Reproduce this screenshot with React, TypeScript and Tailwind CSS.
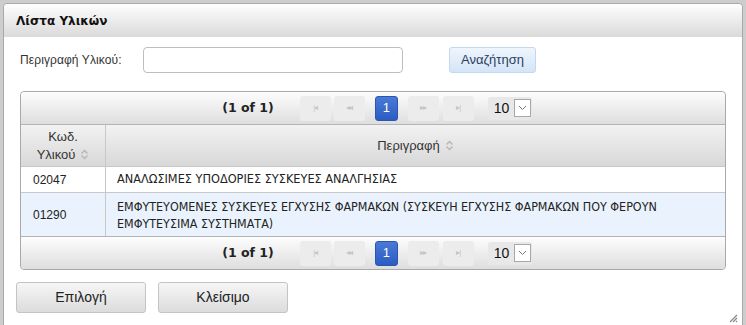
import React from "react";

const font = "font-['Liberation_Sans',Arial,sans-serif]";
const boldFont = "font-['DejaVu_Sans',Verdana,sans-serif] font-bold";
const cellFont = "font-['DejaVu_Sans_Condensed','Liberation_Sans',sans-serif]";

const NavButton = ({ glyph }: { glyph: string }) => (
  <div className="flex h-[25px] w-[31px] items-center justify-center rounded-[3px] bg-[#ececec] text-[8px] tracking-[-1px] text-[#c4c4c4]">
    {glyph}
  </div>
);

const SortIcon = () => (
  <svg width="9" height="11" viewBox="0 0 9 11" className="inline-block">
    <path d="M1.5 4.5 L4.5 1.5 L7.5 4.5" fill="none" stroke="#b8b8b8" strokeWidth="1.5" />
    <path d="M1.5 6.5 L4.5 9.5 L7.5 6.5" fill="none" stroke="#b8b8b8" strokeWidth="1.5" />
  </svg>
);

const Paginator = ({ bottom }: { bottom?: boolean }) => (
  <div
    className={`flex h-[33px] items-center justify-center bg-gradient-to-b from-[#fdfdfd] to-[#dedede] ${
      bottom ? "rounded-b-[4px] border-t border-[#b4b4b4]" : "rounded-t-[4px] border-b border-[#b4b4b4]"
    }`}
  >
    <div className="flex items-center pl-[8px]">
      <span className={`mr-[26px] text-[12.5px] text-[#222] ${boldFont}`}>(1 of 1)</span>
      <div className="flex items-center gap-[3px]">
        <NavButton glyph="|◂" />
        <NavButton glyph="◂◂" />
      </div>
      <div className="mx-[10px] flex h-[25px] w-[23px] items-center justify-center rounded-[3px] border border-[#2a55b0] bg-gradient-to-b from-[#4a7ad6] to-[#2b5cc2] text-[13px] text-white">
        1
      </div>
      <div className="flex items-center gap-[4px]">
        <NavButton glyph="▸▸" />
        <NavButton glyph="▸|" />
      </div>
      <div className="ml-[14px] flex h-[23px] w-[44px] items-center rounded-[3px] bg-[#e8e8e8] pl-[6px]">
        <span className="text-[14px] text-[#111]">10</span>
        <div className="ml-auto mr-[1px] flex h-[18px] w-[17px] items-center justify-center border border-[#a8a8a8] bg-white">
          <svg width="9" height="6" viewBox="0 0 9 6">
            <path d="M1 1 L4.5 4.5 L8 1" fill="none" stroke="#777" strokeWidth="1" />
          </svg>
        </div>
      </div>
    </div>
  </div>
);

export default function App() {
  return (
    <div className={`flex h-[325px] w-[746px] flex-col bg-[#cdcdcd] ${font}`}>
      <div className="flex flex-1 px-[3px] pt-[3px]">
        <div className="flex flex-1 flex-col rounded-t-[4px] border border-[#a9a9a9] bg-white">
          <div
            className={`flex h-[33px] items-center rounded-t-[4px] bg-gradient-to-b from-[#fefefe] to-[#dadada] pl-[12px] text-[12px] text-[#111] ${boldFont}`}
          >
            Λίστα Υλικών
          </div>
          <div className="flex flex-1 flex-col px-[16px]">
            <div className="mt-[10px] flex items-center">
              <label className="w-[123px] text-[12px] tracking-[0.1px] text-[#333]">Περιγραφή Υλικού:</label>
              <input className="h-[26px] w-[260px] rounded-[4px] border border-[#bdbdbd] bg-white" />
              <button className="ml-[46px] h-[26px] w-[87px] rounded-[3px] border border-[#c3d7ef] bg-gradient-to-b from-[#eef5fd] to-[#d4e5f8] text-[13px] text-[#2a3f5c]">
                Αναζήτηση
              </button>
            </div>
            <div className="mt-[18px] overflow-hidden rounded-[4px] border border-[#a9a9a9]">
              <Paginator />
              <div className="flex h-[42px] border-b border-[#c8c8c8] bg-gradient-to-b from-[#f2f2f2] to-[#d8d8d8] text-[13px] text-[#333]">
                <div className="flex w-[85px] flex-col items-center justify-center border-r border-[#c8c8c8] leading-[18px]">
                  <span>Κωδ.</span>
                  <span className="flex items-center gap-[5px]">
                    Υλικού <SortIcon />
                  </span>
                </div>
                <div className="flex flex-1 items-center justify-center gap-[5px]">
                  Περιγραφή <SortIcon />
                </div>
              </div>
              <div className="flex h-[26px] border-b border-[#c8c8c8] bg-white text-[12px] text-[#222]">
                <div className="flex w-[85px] items-center border-r border-[#c8c8c8] pl-[12px]">02047</div>
                <div className={`flex flex-1 items-center pl-[11px] text-[12.6px] ${cellFont}`}>
                  ΑΝΑΛΩΣΙΜΕΣ ΥΠΟΔΟΡΙΕΣ ΣΥΣΚΕΥΕΣ ΑΝΑΛΓΗΣΙΑΣ
                </div>
              </div>
              <div className="flex h-[43px] bg-[#eaf3fd] text-[12px] text-[#222]">
                <div className="flex w-[85px] items-center border-r border-[#c8c8c8] pl-[12px]">01290</div>
                <div className={`flex flex-1 items-center pl-[11px] pr-[10px] text-[12.4px] leading-[17px] ${cellFont}`}>
                  ΕΜΦΥΤΕΥΟΜΕΝΕΣ ΣΥΣΚΕΥΕΣ ΕΓΧΥΣΗΣ ΦΑΡΜΑΚΩΝ (ΣΥΣΚΕΥΗ ΕΓΧΥΣΗΣ ΦΑΡΜΑΚΩΝ ΠΟΥ ΦΕΡΟΥΝ ΕΜΦΥΤΕΥΣΙΜΑ ΣΥΣΤΗΜΑΤΑ)
                </div>
              </div>
              <Paginator bottom />
            </div>
            <div className="mt-[12px] flex gap-[12px]">
              <button className="-ml-[4px] h-[31px] w-[130px] rounded-[3px] border border-[#c4c4c4] bg-gradient-to-b from-[#f6f6f6] to-[#dcdcdc] text-[14px] text-[#222]">
                Επιλογή
              </button>
              <button className="h-[31px] w-[130px] rounded-[3px] border border-[#c4c4c4] bg-gradient-to-b from-[#f6f6f6] to-[#dcdcdc] text-[14px] text-[#222]">
                Κλείσιμο
              </button>
            </div>
            <div className="-mr-[12px] flex flex-1 items-end justify-end pb-[5px]">
              <svg width="10" height="10" viewBox="0 0 10 10">
                <path d="M9 2 L2 9 M9 5 L5 9 M9 8 L8 9" stroke="#888" strokeWidth="1.2" />
              </svg>
            </div>
          </div>
        </div>
      </div>
      <div className="h-[5px] bg-[#3d3d3d]" />
    </div>
  );
}
